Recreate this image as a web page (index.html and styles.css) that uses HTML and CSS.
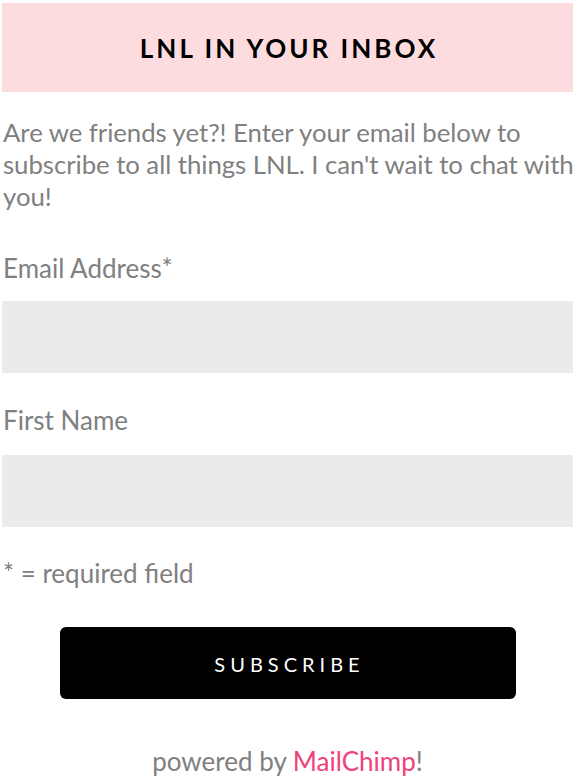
FILE: index.html
```html
<!DOCTYPE html>
<html>
<head>
<meta charset="utf-8">
<link rel="stylesheet" href="styles.css">
</head>
<body>
<div class="page">
  <div class="banner"><h2 class="banner-title">LNL IN YOUR INBOX</h2></div>
  <p class="intro">Are we friends yet?! Enter your email below to subscribe to all things LNL. I can't wait to chat with you!</p>
  <form class="form">
    <label class="label" for="email">Email Address*</label>
    <input class="field" id="email" type="email">
    <label class="label label-second" for="fname">First Name</label>
    <input class="field field-second" id="fname" type="text">
    <p class="note">* = required field</p>
    <div class="actions"><button class="btn" type="button">SUBSCRIBE</button></div>
    <p class="powered">powered by <a class="mc" href="#">MailChimp</a>!</p>
  </form>
</div>
</body>
</html>
```
FILE: styles.css
```css
html, body { margin: 0; padding: 0; background: #fff; }
body { font-family: Lato, "Open Sans", sans-serif; color: #808080; }
.page { padding: 3px 0 0 2px; }
.banner { background: #fddcdf; height: 89px; display: flex; align-items: center; justify-content: center; }
.banner-title { margin: 0; font-size: 26px; font-weight: 700; letter-spacing: 3px; color: #000; padding-left: 3px; }
.intro { margin: 24px -4px 0 1px; font-size: 25.8px; letter-spacing: -0.06px; line-height: 32px; }
.form { display: flex; flex-direction: column; }
.label { margin-top: 40px; font-size: 26px; line-height: 32px; padding-left: 1px; }
.label-second { margin-top: 31px; }
.field { margin-top: 17px; height: 72px; border: 0; background: #ebebeb; box-sizing: border-box; width: 100%; padding: 0 10px; font: inherit; }
.field-second { margin-top: 19px; }
.note { margin: 30px 0 0 1px; font-size: 26px; line-height: 32px; }
.actions { margin-top: 38px; padding-left: 58px; width: 456px; }
.btn { width: 456px; height: 72px; border: 0; border-radius: 6px; background: #000; color: #fff; font-family: Lato, sans-serif; font-size: 20px; letter-spacing: 5px; padding: 2px 0 0 3px; }
.powered { margin: 46px 0 0; text-align: center; font-size: 26px; line-height: 32px; }
.mc { color: #f0417a; text-decoration: none; }
```
